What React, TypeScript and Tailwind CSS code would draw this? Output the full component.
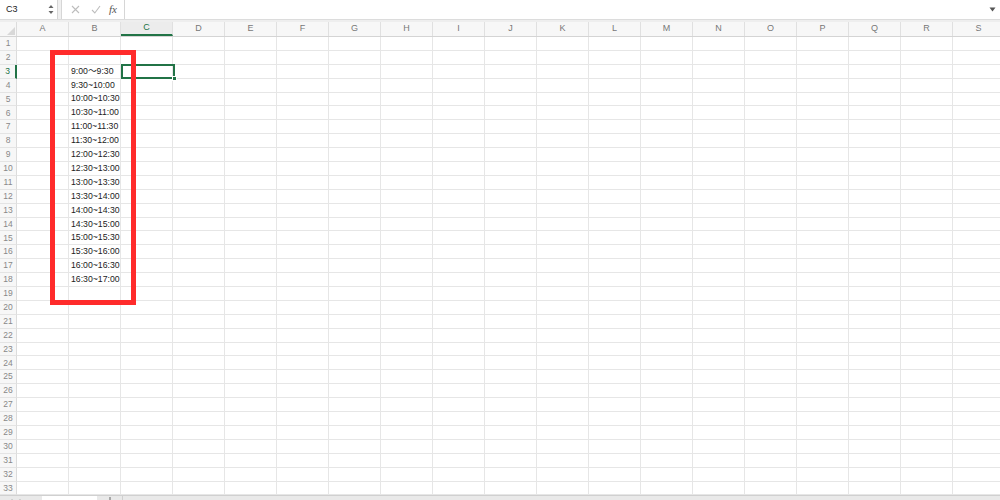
import React from "react";

const cols = ["A","B","C","D","E","F","G","H","I","J","K","L","M","N","O","P","Q","R","S"];
const times: Record<number, string> = {
  3: "9:00〜9:30",
  4: "9:30~10:00",
  5: "10:00~10:30",
  6: "10:30~11:00",
  7: "11:00~11:30",
  8: "11:30~12:00",
  9: "12:00~12:30",
  10: "12:30~13:00",
  11: "13:00~13:30",
  12: "13:30~14:00",
  13: "14:00~14:30",
  14: "14:30~15:00",
  15: "15:00~15:30",
  16: "15:30~16:00",
  17: "16:00~16:30",
  18: "16:30~17:00",
};

export default function App() {
  const rows = Array.from({ length: 33 }, (_, i) => i + 1);
  return (
    <div
      className="relative w-[1000px] h-[500px] overflow-hidden bg-white text-[#333]"
      style={{ fontFamily: '"Liberation Sans", "Noto Sans CJK JP", sans-serif' }}
    >
      {/* formula bar */}
      <div className="flex h-[20px] bg-[#f0f0f0] border-b border-[#dcdcdc]">
        <div className="flex w-[58px] items-center justify-between bg-white border-r border-[#d6d6d6] pl-[6px] pr-[3px]">
          <span className="text-[9px] text-[#222]">C3</span>
          <svg width="6" height="11" viewBox="0 0 6 11">
            <path d="M3 1 L5.5 4 H0.5 Z" fill="#666" />
            <path d="M3 10 L5.5 7 H0.5 Z" fill="#666" />
          </svg>
        </div>
        <div className="w-[3px]" />
        <div className="flex w-[64px] items-center bg-white border-l border-r border-[#d6d6d6]">
          <svg className="ml-[9px]" width="9" height="9" viewBox="0 0 9 9">
            <path d="M1 1 L8 8 M8 1 L1 8" stroke="#bdbdbd" strokeWidth="1.1" />
          </svg>
          <svg className="ml-[11px]" width="10" height="9" viewBox="0 0 10 9">
            <path d="M1 5 L3.8 8 L9 1" stroke="#bdbdbd" strokeWidth="1.1" fill="none" />
          </svg>
          <span
            className="ml-[8px] text-[11px] italic text-[#555]"
            style={{ fontFamily: '"Liberation Serif", serif' }}
          >
            fx
          </span>
        </div>
        <div className="flex flex-1 items-center justify-end bg-white pr-[4px]">
          <svg width="7" height="5" viewBox="0 0 7 5">
            <path d="M0.5 0.5 H6.5 L3.5 4.5 Z" fill="#555" />
          </svg>
        </div>
      </div>
      <div className="h-[2px] bg-[#eeeeee]" />

      {/* column headers */}
      <div className="flex h-[15px] bg-[#f7f7f7] border-b border-[#d4d4d4]">
        <div className="relative w-[17px] shrink-0 border-r border-[#dcdcdc]">
          <svg className="absolute right-[1px] bottom-[1px]" width="8" height="8" viewBox="0 0 8 8">
            <path d="M8 0 V8 H0 Z" fill="#d8d8d8" />
          </svg>
        </div>
        {cols.map((c) => (
          <div
            key={c}
            className={`flex w-[52px] shrink-0 items-center justify-center text-[9px] border-r border-[#e0e0e0] ${
              c === "C" ? "text-[#217346] border-b-2 border-b-[#217346] bg-[#ececec]" : "text-[#777]"
            }`}
          >
            {c}
          </div>
        ))}
      </div>

      {/* grid rows */}
      {rows.map((r) => (
        <div key={r} className="flex h-[13.9px]">
          <div
            className={`flex w-[17px] shrink-0 items-center justify-center bg-[#f7f7f7] text-[8.5px] border-b border-[#e4e4e4] ${
              r === 3 ? "text-[#217346] border-r-2 border-r-[#217346]" : "text-[#888] border-r border-r-[#dcdcdc]"
            }`}
          >
            {r}
          </div>
          {cols.map((c) => (
            <div
              key={c}
              className="flex w-[52px] shrink-0 items-center whitespace-nowrap border-r border-b border-[#e6e6e6] pl-[2px] text-[8.7px] text-[#222]"
            >
              {c === "B" && times[r] ? times[r] : null}
            </div>
          ))}
        </div>
      ))}

      {/* sheet tabs */}
      <div className="flex h-[10px] bg-[#e9e9e9] border-t border-[#d0d0d0]">
        <div className="flex w-[42px] items-start gap-[6px] pl-[8px] pt-[3px]">
          <svg width="5" height="5" viewBox="0 0 5 5"><path d="M4.5 0 V5 L0.5 2.5 Z" fill="#aaa" /></svg>
          <svg width="5" height="5" viewBox="0 0 5 5"><path d="M0.5 0 V5 L4.5 2.5 Z" fill="#aaa" /></svg>
        </div>
        <div className="w-[55px] bg-white" />
        <div className="flex w-[26px] justify-center border-r border-[#cfcfcf] pt-[1px]">
          <svg width="8" height="8" viewBox="0 0 8 8"><path d="M4 0 V8 M0 4 H8" stroke="#666" strokeWidth="1" /></svg>
        </div>
      </div>

      {/* selected cell C3 */}
      <div className="absolute left-[121px] top-[64px] h-[15px] w-[54px] border-2 border-[#217346]" />
      <div className="absolute left-[172px] top-[76px] h-[5px] w-[5px] bg-[#217346] border border-white" />

      {/* red highlight box */}
      <div className="absolute left-[50px] top-[50px] h-[255px] w-[86px] border-[5px] border-[#ff2b2b]" />
    </div>
  );
}
